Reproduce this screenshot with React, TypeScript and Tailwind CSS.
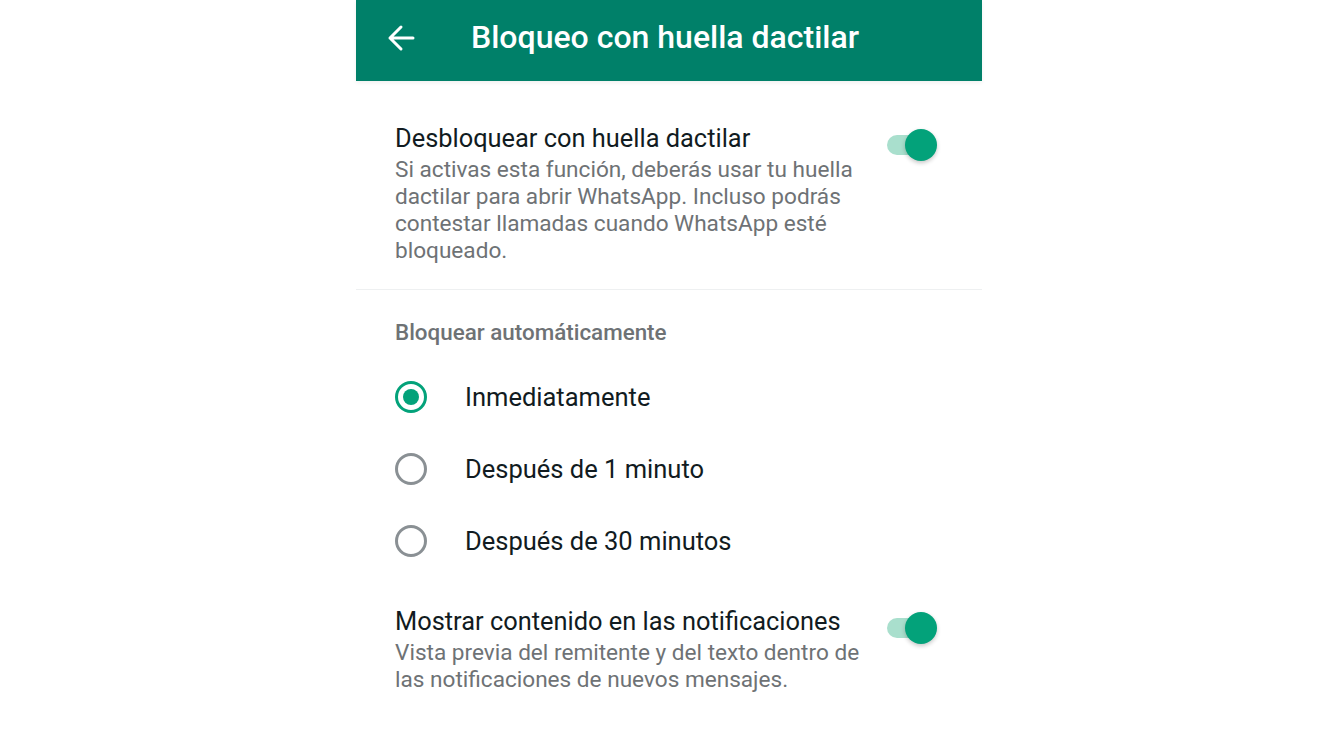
import { useState } from "react";

type Option = {
    id: string;
    label: string;
};

const options: Option[] = [
    { id: "now", label: "Inmediatamente" },
    { id: "1min", label: "Después de 1 minuto" },
    { id: "30min", label: "Después de 30 minutos" },
];

function Toggle({ on, onClick }: { on: boolean; onClick: () => void }) {
    return (
        <button
            type="button"
            onClick={onClick}
            className="relative w-[52px] h-[34px] shrink-0 cursor-pointer"
        >
            <span
                className={`absolute left-[1px] top-[7px] w-[44px] h-[20px] rounded-full ${
                    on ? "bg-[#a9dfcd]" : "bg-[#c4c7c8]"
                }`}
            />
            <span
                className={`absolute top-[1px] w-[32px] h-[32px] rounded-full shadow-[0_2px_4px_rgba(0,0,0,0.22)] ${
                    on ? "left-[19px] bg-[#03a27a]" : "left-0 bg-[#f1f1f1]"
                }`}
            />
        </button>
    );
}

export default function App() {
    const [fingerprint, setFingerprint] = useState(true);
    const [preview, setPreview] = useState(true);
    const [selected, setSelected] = useState("now");

    return (
        <div
            className="w-full min-h-[745px] bg-white flex justify-center"
            style={{ fontFamily: "Roboto, 'Noto Sans', sans-serif" }}
        >
            <div className="w-[626px] flex flex-col">
                {/* header */}
                <div className="h-[81px] bg-[#008069] flex items-center shadow-[0_2px_4px_rgba(0,0,0,0.06)]">
                    <button type="button" className="ml-[31px] -mt-[6px] w-[28px] h-[28px] flex items-center justify-center text-white">
                        <svg width="28" height="28" viewBox="0 0 28 28" fill="none" stroke="currentColor" strokeWidth="3" strokeLinecap="round" strokeLinejoin="round">
                            <path d="M3 14h23M14 3L3 14l11 11" />
                        </svg>
                    </button>
                    <h1 className="ml-[56px] -mt-[8px] text-white text-[32px] font-medium leading-none">
                        Bloqueo con huella dactilar
                    </h1>
                </div>

                {/* fingerprint */}
                <div className="pt-[41px] pb-[25px] pl-[39px] pr-[44px] flex items-start justify-between">
                    <div className="w-[475px]">
                        <p className="text-[25.4px] leading-[32px] text-[#111b21]">Desbloquear con huella dactilar</p>
                        <p className="mt-[2px] text-[22.6px] leading-[27px] text-[#6e7275]">
                            Si activas esta función, deberás usar tu huella dactilar para abrir WhatsApp. Incluso podrás contestar llamadas cuando WhatsApp esté bloqueado.
                        </p>
                    </div>
                    <div className="mt-[6px]">
                        <Toggle on={fingerprint} onClick={() => setFingerprint(!fingerprint)} />
                    </div>
                </div>

                <div className="h-px bg-[#eef0f1]" />

                {/* auto lock */}
                <div className="pl-[39px] pt-[28px]">
                    <p className="text-[22.4px] leading-[28px] font-medium text-[#6e7275]">Bloquear automáticamente</p>
                    <div className="mt-[15px] flex flex-col">
                        {options.map((o) => (
                            <button
                                key={o.id}
                                type="button"
                                onClick={() => setSelected(o.id)}
                                className="h-[72px] flex items-center text-left cursor-pointer"
                            >
                                <span
                                    className={`w-[32px] h-[32px] rounded-full border-[3px] flex items-center justify-center ${
                                        selected === o.id ? "border-[#03a27a]" : "border-[#8a9094]"
                                    }`}
                                >
                                    {selected === o.id && <span className="w-[16px] h-[16px] rounded-full bg-[#03a27a]" />}
                                </span>
                                <span className="ml-[38px] text-[25.5px] leading-[32px] text-[#111b21]">{o.label}</span>
                            </button>
                        ))}
                    </div>
                </div>

                {/* notifications */}
                <div className="pt-[28px] pl-[39px] pr-[44px] flex items-start justify-between">
                    <div className="w-[475px]">
                        <p className="text-[25.4px] leading-[32px] text-[#111b21]">Mostrar contenido en las notificaciones</p>
                        <p className="mt-[2px] text-[22.6px] leading-[27px] text-[#6e7275]">
                            Vista previa del remitente y del texto dentro de las notificaciones de nuevos mensajes.
                        </p>
                    </div>
                    <div className="mt-[6px]">
                        <Toggle on={preview} onClick={() => setPreview(!preview)} />
                    </div>
                </div>
            </div>
        </div>
    );
}
